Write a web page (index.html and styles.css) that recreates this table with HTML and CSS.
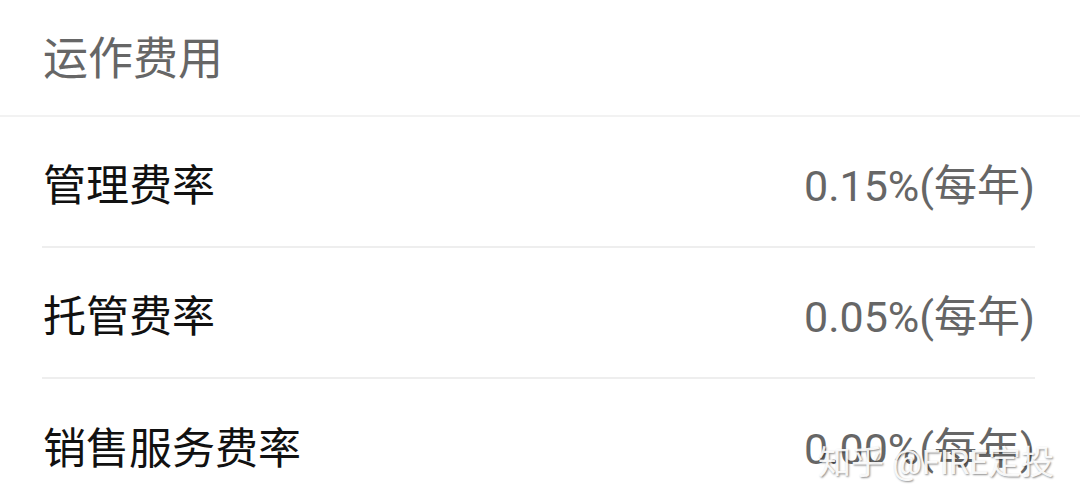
FILE: index.html
```html
<!DOCTYPE html>
<html lang="zh-CN">
<head>
<meta charset="utf-8">
<link rel="stylesheet" href="styles.css">
</head>
<body>
<div class="page">
  <div class="header">运作费用</div>
  <div class="list">
    <div class="row"><span class="label">管理费率</span><span class="value">0.15%(每年)</span></div>
    <div class="row"><span class="label">托管费率</span><span class="value">0.05%(每年)</span></div>
    <div class="row last"><span class="label">销售服务费率</span><span class="value">0.00%(每年)</span></div>
  </div>
  <div class="watermark">知乎 @FIRE定投</div>
</div>
</body>
</html>
```
FILE: styles.css
```css
html, body {
  margin: 0;
  padding: 0;
  background: #ffffff;
}
.page {
  position: relative;
  width: 1080px;
  height: 502px;
  overflow: hidden;
  font-family: Roboto, "Noto Sans CJK SC", sans-serif;
}
.header {
  height: 117px;
  box-sizing: border-box;
  padding-left: 43px;
  padding-bottom: 4px;
  display: flex;
  align-items: center;
  font-size: 45px;
  color: #666666;
  border-bottom: 2px solid #f2f2f2;
}
.list {
  margin: 0 45px 0 42px;
}
.row {
  height: 131px;
  box-sizing: border-box;
  display: flex;
  align-items: center;
  justify-content: space-between;
  border-bottom: 2px solid #eeeeee;
}
.row.last {
  border-bottom: none;
}
.label {
  font-size: 43px;
  color: #111111;
  padding-left: 1px;
}
.value {
  font-size: 43px;
  color: #666666;
}
.watermark {
  position: absolute;
  left: 818px;
  top: 436px;
  font-size: 33px;
  color: rgba(255,255,255,0.92);
  text-shadow: 1px 1px 2px rgba(0,0,0,0.45);
  white-space: nowrap;
}
```
